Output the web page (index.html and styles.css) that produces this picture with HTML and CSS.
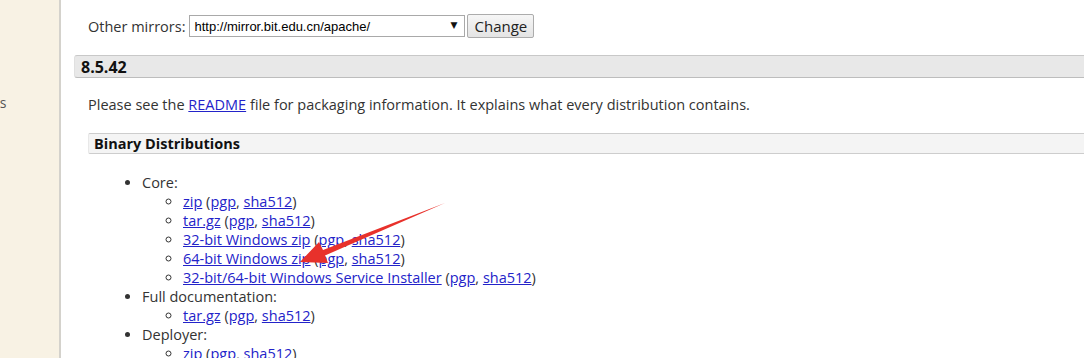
FILE: index.html
```html
<!DOCTYPE html>
<html lang="en">
<head>
    <meta charset="UTF-8">
    <title>Apache Tomcat 8 Downloads</title>
    <link rel="stylesheet" href="styles.css">
</head>
<body>

<div class="page">
    <div class="sidebar">
        <span class="side-text">rs</span>
    </div>

    <div class="main">
        <form class="mirrors">
            <label for="mirror">Other mirrors:</label>
            <span class="select-wrap">
                <select id="mirror" class="mirror-select">
                    <option>http://mirror.bit.edu.cn/apache/</option>
                </select>
            </span>
            <button type="button" class="change-btn">Change</button>
        </form>

        <h3 class="version">8.5.42</h3>

        <div class="section">
            <p class="intro">Please see the <a href="javascript:void(0);">README</a> file for packaging information. It explains what every distribution contains.</p>

            <h4 class="sub-title">Binary Distributions</h4>

            <ul class="dist">
                <li>Core:
                    <ul>
                        <li><a href="javascript:void(0);">zip</a> (<a href="javascript:void(0);">pgp</a>, <a href="javascript:void(0);">sha512</a>)</li>
                        <li><a href="javascript:void(0);">tar.gz</a> (<a href="javascript:void(0);">pgp</a>, <a href="javascript:void(0);">sha512</a>)</li>
                        <li><a href="javascript:void(0);">32-bit Windows zip</a> (<a href="javascript:void(0);">pgp</a>, <a href="javascript:void(0);">sha512</a>)</li>
                        <li><a href="javascript:void(0);">64-bit Windows zip</a> (<a href="javascript:void(0);">pgp</a>, <a href="javascript:void(0);">sha512</a>)</li>
                        <li><a href="javascript:void(0);">32-bit/64-bit Windows Service Installer</a> (<a href="javascript:void(0);">pgp</a>, <a href="javascript:void(0);">sha512</a>)</li>
                    </ul>
                </li>
                <li>Full documentation:
                    <ul>
                        <li><a href="javascript:void(0);">tar.gz</a> (<a href="javascript:void(0);">pgp</a>, <a href="javascript:void(0);">sha512</a>)</li>
                    </ul>
                </li>
                <li>Deployer:
                    <ul>
                        <li><a href="javascript:void(0);">zip</a> (<a href="javascript:void(0);">pgp</a>, <a href="javascript:void(0);">sha512</a>)</li>
                    </ul>
                </li>
            </ul>
        </div>

        <!-- 截图上画的红色箭头 -->
        <svg class="arrow" width="160" height="72" viewBox="0 0 160 72">
            <path d="M155 8 L33 55 L29 47 L10 67 L38 68 L35 60.5 Z" fill="#e8312b"/>
        </svg>
    </div>
</div>

</body>
</html>
```

FILE: styles.css
```css
* {
    margin: 0;
    padding: 0;
}

body {
    font-family: "Open Sans", "Liberation Sans", sans-serif;
    font-size: 14.5px;
    color: #333;
    background: white;
    overflow: hidden;
}

.page {
    display: flex;
    height: 358px;
}

.sidebar {
    width: 59px;
    flex-shrink: 0;
    background-color: #f8f2e4;
    border-right: 2px solid #d4d2cc;
    position: relative;
}

.side-text {
    position: absolute;
    left: -6px;
    top: 93px;
    font-size: 14px;
    color: #555;
}

.main {
    flex: 1;
    padding-left: 13px;
    position: relative;
    min-width: 0;
}

.mirrors {
    display: flex;
    align-items: center;
    margin: 14px 0 0 14px;
    height: 24px;
}

.mirrors label {
    font-size: 14.5px;
    margin-right: 4px;
}

.select-wrap {
    position: relative;
    display: block;
}

.select-wrap::after {
    content: "\25BC";
    position: absolute;
    right: 8px;
    top: 5px;
    font: 9px "DejaVu Sans", sans-serif;
    color: #111;
    pointer-events: none;
}

.mirror-select {
    display: block;
    -webkit-appearance: none;
    appearance: none;
    width: 276px;
    height: 22px;
    font: 13px "Liberation Sans", Arial, sans-serif;
    color: #000;
    border: 1px solid #a9a9a9;
    border-radius: 0;
    background: white;
    padding-left: 4px;
}

.change-btn {
    margin-left: 2px;
    height: 24px;
    padding: 0 6px;
    font: 15px "Open Sans", "Liberation Sans", sans-serif;
    color: #222;
    background: linear-gradient(#f6f6f6, #e4e4e4);
    border: 1px solid #acacac;
    border-radius: 2px;
}

.version {
    margin-top: 17px;
    height: 21px;
    padding-left: 6px;
    font-size: 16px;
    line-height: 22px;
    font-weight: bold;
    color: #111;
    background-color: #e8e8e8;
    border-top: 1px solid #c8c8c8;
    border-bottom: 1px solid #bdbdbd;
    border-left: 1px solid #e0e0e0;
    border-radius: 3px 0 0 3px;
}

.section {
    padding-left: 14px;
}

.intro {
    margin-top: 17px;
    line-height: 20px;
}

a {
    color: #2323c9;
}

.sub-title {
    margin-top: 18px;
    height: 19px;
    padding-left: 5px;
    font-size: 14.5px;
    line-height: 19px;
    font-weight: bold;
    color: #111;
    background-color: #f4f4f4;
    border-top: 1px solid #cdcdcd;
    border-bottom: 1px solid #cdcdcd;
    border-left: 1px solid #e8e8e8;
    border-radius: 2px 0 0 2px;
}

.dist {
    margin-top: 19px;
    padding-left: 54px;
    list-style: disc;
    line-height: 19px;
}

.dist ul {
    padding-left: 41px;
    list-style: circle;
}

.arrow {
    position: absolute;
    left: 229px;
    top: 195px;
}
```
